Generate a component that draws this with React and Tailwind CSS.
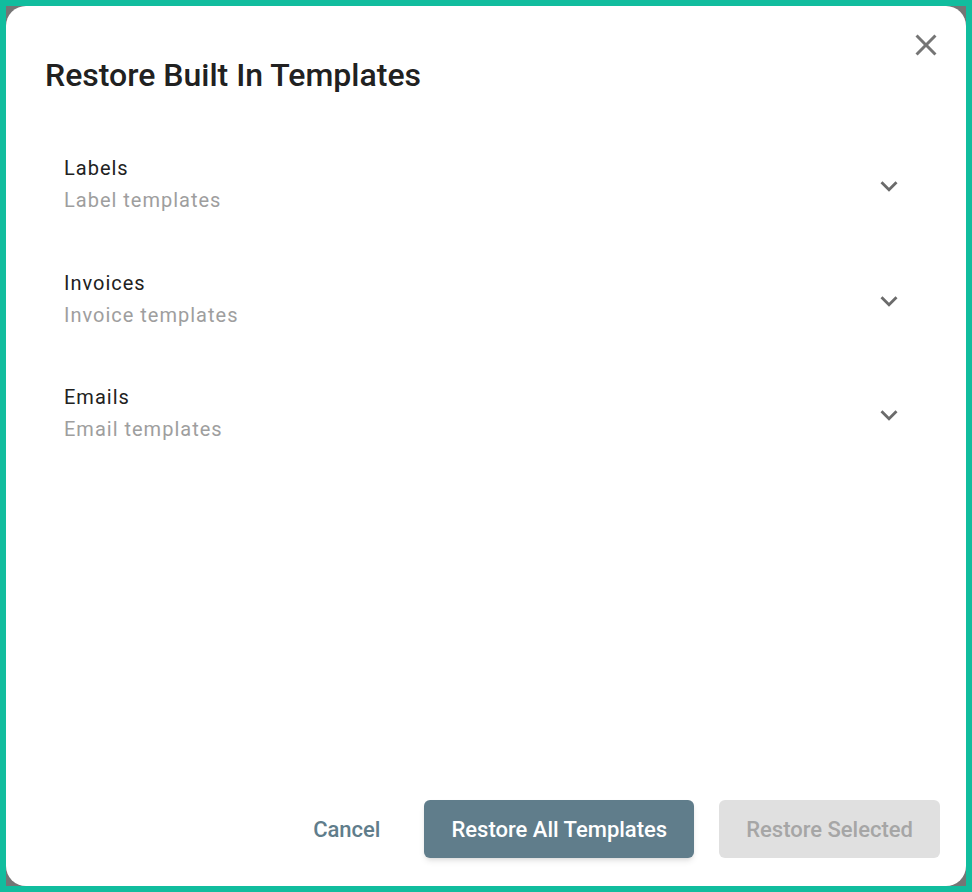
import { useState } from "react";

const groups = [
  { name: "Labels", sub: "Label templates" },
  { name: "Invoices", sub: "Invoice templates" },
  { name: "Emails", sub: "Email templates" },
];

const ChevronDown = () => (
  <svg width="34" height="34" viewBox="0 0 24 24" fill="#6b6b6b">
    <path d="M16.59 8.59 12 13.17 7.41 8.59 6 10l6 6 6-6z" />
  </svg>
);

const CloseIcon = () => (
  <svg width="36" height="36" viewBox="0 0 24 24" fill="#757575">
    <path d="M19 6.41 17.59 5 12 10.59 6.41 5 5 6.41 10.59 12 5 17.59 6.41 19 12 13.41 17.59 19 19 17.59 13.41 12z" />
  </svg>
);

const App = () => {
  const [open, setOpen] = useState(null);

  return (
    <div
      className="w-[972px] h-[892px] bg-[#11bd9e] p-[6px]"
      style={{ fontFamily: "Roboto, 'Liberation Sans', sans-serif" }}
    >
      <div className="w-full h-full bg-[#757575]">
        <div className="relative w-full h-full bg-white rounded-[20px] flex flex-col px-[39px] pt-[49px] pb-[28px]">
          <button className="absolute left-[902px] top-[21px]">
            <CloseIcon />
          </button>

          <h2 className="text-[32px] leading-[40px] font-medium text-[#212121]">
            Restore Built In Templates
          </h2>

          {/* template groups */}
          <div className="mt-[32px] flex flex-col">
            {groups.map((g, i) => (
              <div
                key={g.name}
                onClick={() => setOpen(open === i ? null : i)}
                className="flex items-center justify-between pl-[19px] pr-[21px] py-[25px] h-[114.5px] cursor-pointer"
              >
                <div className="flex flex-col">
                  <span className="text-[20px] leading-[32px] tracking-[1px] text-[#212121]">{g.name}</span>
                  <span className="text-[20px] leading-[32px] tracking-[1px] text-[#9e9e9e]">{g.sub}</span>
                </div>
                <div className="mt-[4px]">
                  <ChevronDown />
                </div>
              </div>
            ))}
          </div>

          <div className="mt-auto flex items-center justify-end mr-[-13px]">
            <button className="h-[58px] px-[26px] text-[22px] font-medium text-[#607d8b] mr-[18px]">
              Cancel
            </button>
            <button className="h-[58px] px-[27px] rounded-[6px] bg-[#607d8b] text-white text-[22px] font-medium shadow-md mr-[25px]">
              Restore All Templates
            </button>
            <button
              disabled
              className="h-[58px] px-[27px] rounded-[6px] bg-[#e0e0e0] text-[#a6a6a6] text-[22px] font-medium"
            >
              Restore Selected
            </button>
          </div>
        </div>
      </div>
    </div>
  );
};

export default App;
